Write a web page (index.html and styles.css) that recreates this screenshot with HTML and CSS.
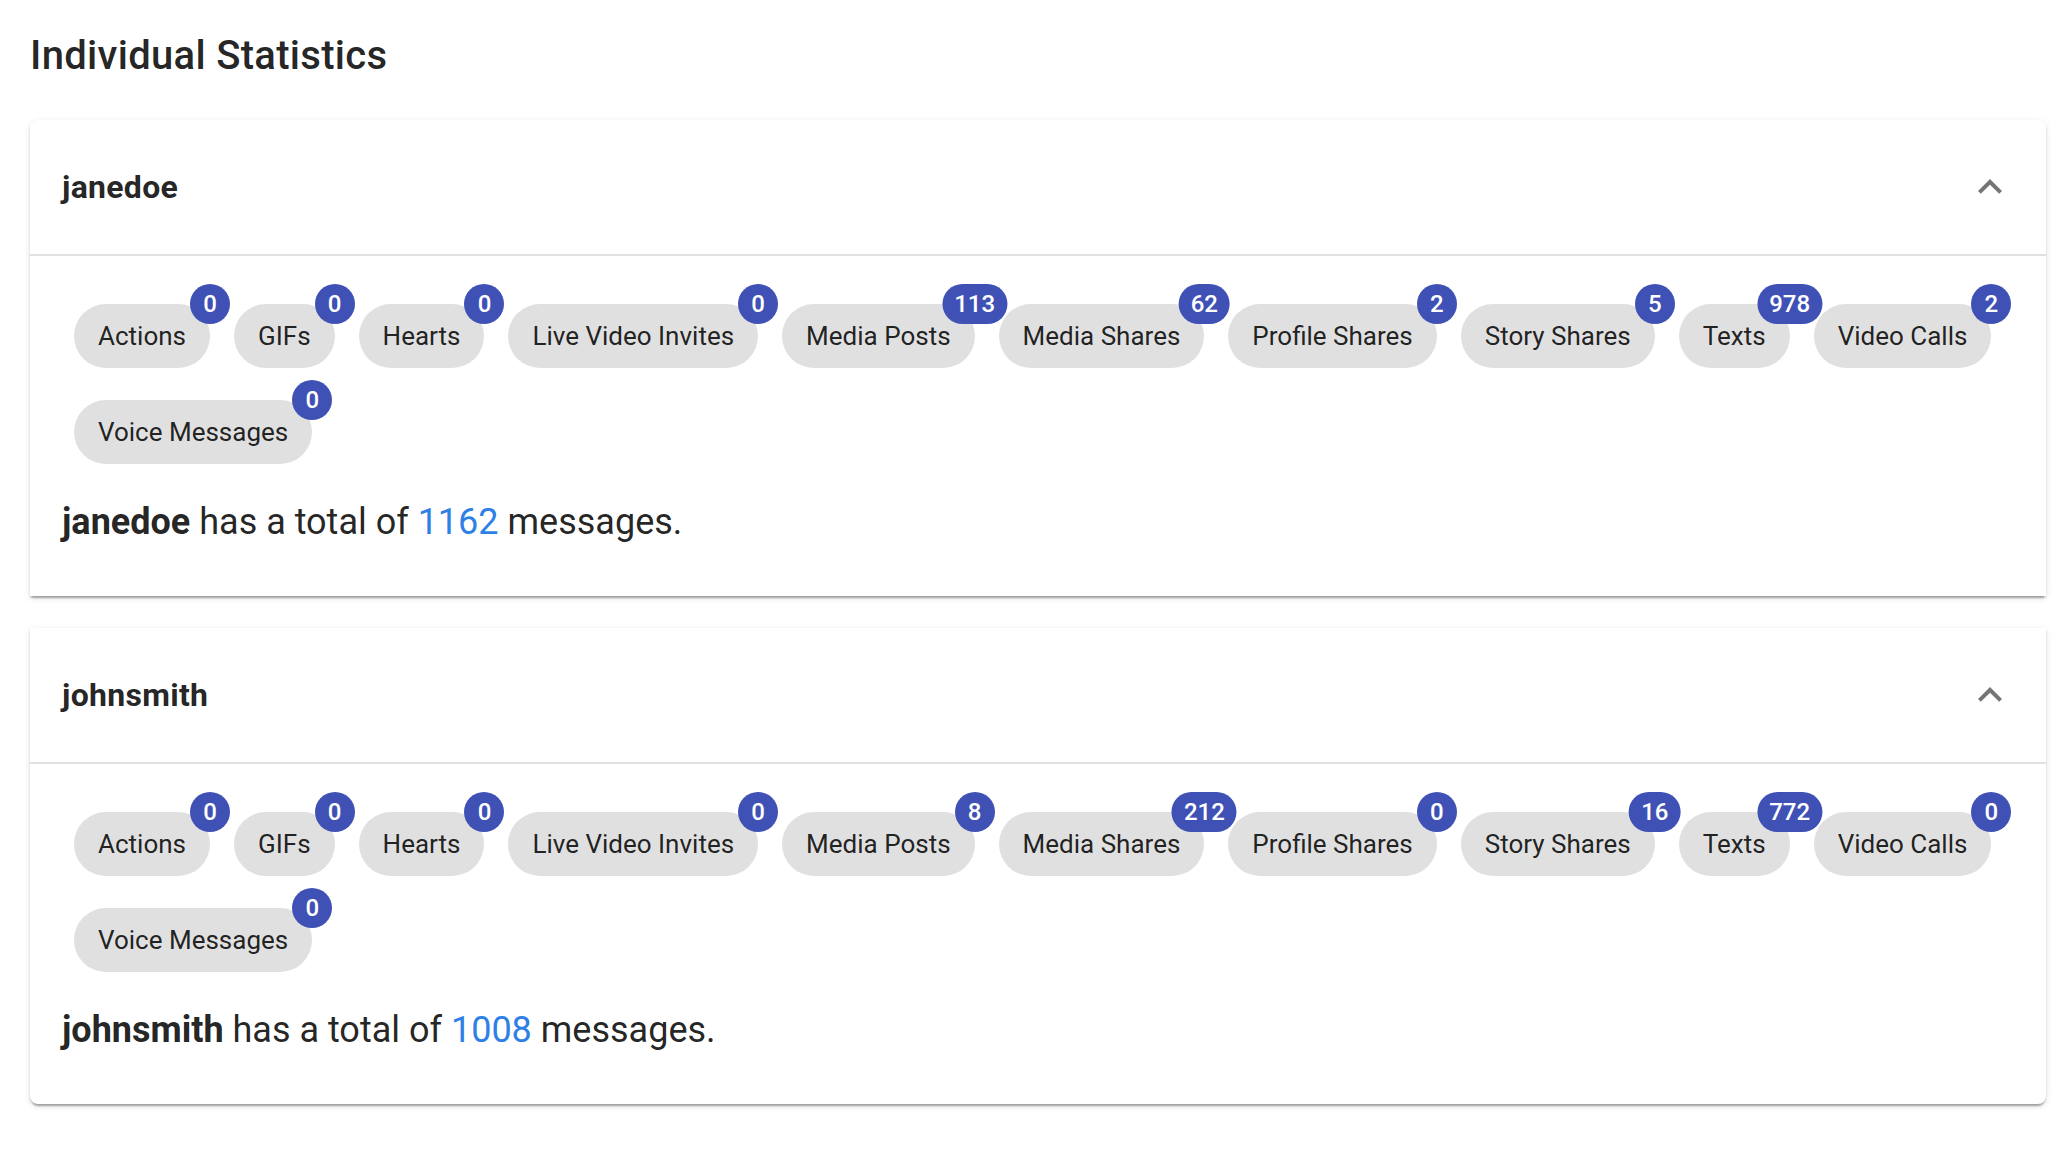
FILE: index.html
```html
<!DOCTYPE html>
<html lang="en">
<head>
<meta charset="utf-8">
<title>Individual Statistics</title>
<link rel="stylesheet" href="styles.css">
</head>
<body>
<main class="page">
  <h1 class="title">Individual Statistics</h1>
  <div class="accordions">
    <section class="card">
      <header class="summary">
        <span class="user">janedoe</span>
        <svg class="chevron" viewBox="0 0 24 24" width="48" height="48"><path d="M7.41 15.41L12 10.83l4.59 4.58L18 14l-6-6-6 6z"/></svg>
      </header>
      <div class="details">
        <div class="chips">
          <span class="badge-wrap"><span class="chip">Actions</span><span class="badge">0</span></span>
          <span class="badge-wrap"><span class="chip">GIFs</span><span class="badge">0</span></span>
          <span class="badge-wrap"><span class="chip">Hearts</span><span class="badge">0</span></span>
          <span class="badge-wrap"><span class="chip">Live Video Invites</span><span class="badge">0</span></span>
          <span class="badge-wrap"><span class="chip">Media Posts</span><span class="badge">113</span></span>
          <span class="badge-wrap"><span class="chip">Media Shares</span><span class="badge">62</span></span>
          <span class="badge-wrap"><span class="chip">Profile Shares</span><span class="badge">2</span></span>
          <span class="badge-wrap"><span class="chip">Story Shares</span><span class="badge">5</span></span>
          <span class="badge-wrap"><span class="chip">Texts</span><span class="badge">978</span></span>
          <span class="badge-wrap"><span class="chip">Video Calls</span><span class="badge">2</span></span>
          <span class="badge-wrap"><span class="chip">Voice Messages</span><span class="badge">0</span></span>
        </div>
        <p class="total"><strong>janedoe</strong> has a total of <span class="count">1162</span> messages.</p>
      </div>
    </section>
    <section class="card">
      <header class="summary">
        <span class="user">johnsmith</span>
        <svg class="chevron" viewBox="0 0 24 24" width="48" height="48"><path d="M7.41 15.41L12 10.83l4.59 4.58L18 14l-6-6-6 6z"/></svg>
      </header>
      <div class="details">
        <div class="chips">
          <span class="badge-wrap"><span class="chip">Actions</span><span class="badge">0</span></span>
          <span class="badge-wrap"><span class="chip">GIFs</span><span class="badge">0</span></span>
          <span class="badge-wrap"><span class="chip">Hearts</span><span class="badge">0</span></span>
          <span class="badge-wrap"><span class="chip">Live Video Invites</span><span class="badge">0</span></span>
          <span class="badge-wrap"><span class="chip">Media Posts</span><span class="badge">8</span></span>
          <span class="badge-wrap"><span class="chip">Media Shares</span><span class="badge">212</span></span>
          <span class="badge-wrap"><span class="chip">Profile Shares</span><span class="badge">0</span></span>
          <span class="badge-wrap"><span class="chip">Story Shares</span><span class="badge">16</span></span>
          <span class="badge-wrap"><span class="chip">Texts</span><span class="badge">772</span></span>
          <span class="badge-wrap"><span class="chip">Video Calls</span><span class="badge">0</span></span>
          <span class="badge-wrap"><span class="chip">Voice Messages</span><span class="badge">0</span></span>
        </div>
        <p class="total"><strong>johnsmith</strong> has a total of <span class="count">1008</span> messages.</p>
      </div>
    </section>
  </div>
</main>
</body>
</html>
```

FILE: styles.css
```css
* { box-sizing: border-box; }

html, body {
  margin: 0;
  padding: 0;
  background: #ffffff;
}

body {
  font-family: Roboto, "Liberation Sans", Arial, sans-serif;
  color: rgba(0, 0, 0, 0.87);
}

.page {
  padding: 24px 24px 40px 30px;
}

.title {
  margin: 0;
  font-size: 40px;
  font-weight: 500;
  line-height: 64px;
  letter-spacing: 0.0075em;
}

.accordions {
  margin-top: 32px;
  display: flex;
  flex-direction: column;
  gap: 32px;
}

.card {
  background: #fff;
  box-shadow: 0 4px 2px -2px rgba(0, 0, 0, 0.2),
              0 2px 2px 0 rgba(0, 0, 0, 0.14),
              0 2px 6px 0 rgba(0, 0, 0, 0.12);
}

.card:first-child {
  border-top-left-radius: 8px;
  border-top-right-radius: 8px;
}

.card:last-child {
  border-bottom-left-radius: 8px;
  border-bottom-right-radius: 8px;
}

.summary {
  height: 136px;
  padding: 0 32px;
  display: flex;
  align-items: center;
  justify-content: space-between;
  border-bottom: 2px solid #e0e0e0;
}

.user {
  font-size: 32px;
  font-weight: 700;
  line-height: 48px;
  letter-spacing: 0.00938em;
}

.chevron {
  display: block;
  fill: rgba(0, 0, 0, 0.54);
}

.details {
  padding: 16px 32px 32px 32px;
}

.chips {
  display: flex;
  flex-wrap: wrap;
  column-gap: 24px;
  row-gap: 32px;
  padding: 32px 0 0 12px;
}

.badge-wrap {
  position: relative;
  display: inline-flex;
}

.chip {
  display: inline-flex;
  align-items: center;
  height: 64px;
  padding: 0 24px;
  border-radius: 32px;
  background: #e0e0e0;
  color: rgba(0, 0, 0, 0.87);
  font-size: 26px;
  white-space: nowrap;
}

.badge {
  position: absolute;
  top: 0;
  right: 0;
  transform: translate(50%, -50%);
  height: 40px;
  min-width: 40px;
  padding: 0 12px;
  border-radius: 20px;
  background: #3f51b5;
  color: #fff;
  font-size: 24px;
  font-weight: 500;
  display: flex;
  align-items: center;
  justify-content: center;
  line-height: 1;
}

.total {
  margin: 31px 0 15px 0;
  font-size: 36px;
  line-height: 54px;
}

.total strong {
  font-weight: 700;
}

.count {
  color: #2e7fe6;
}
```
